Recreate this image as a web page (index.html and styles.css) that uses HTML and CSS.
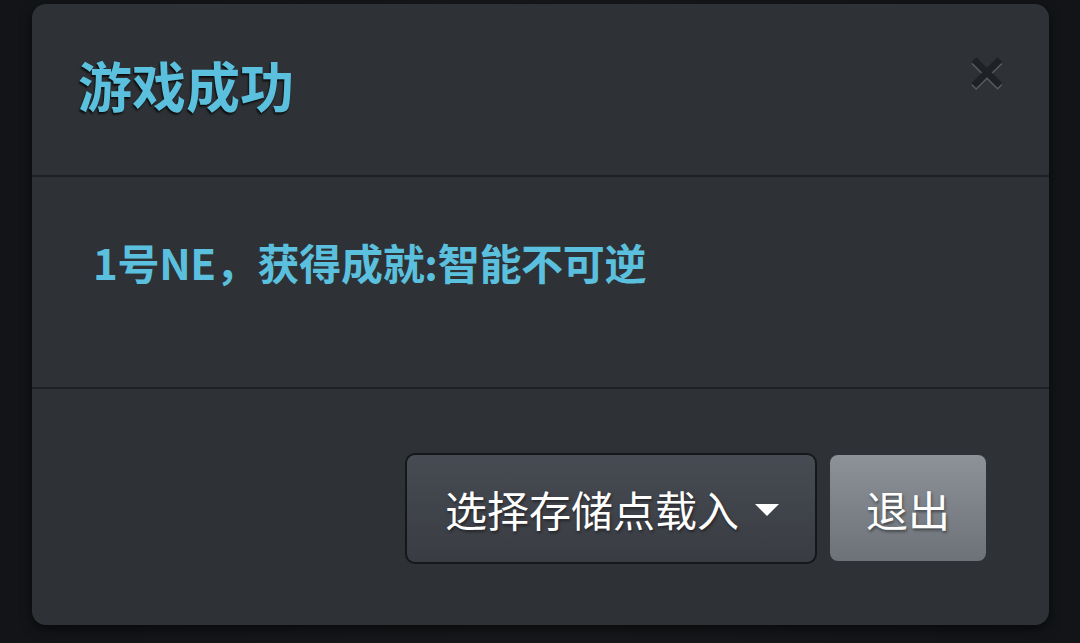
FILE: index.html
```html
<!DOCTYPE html>
<html lang="zh">
<head>
<meta charset="utf-8">
<title>游戏成功</title>
<link rel="stylesheet" href="styles.css">
</head>
<body>
<div class="backdrop">
  <div class="modal">
    <div class="modal-header">
      <h4 class="modal-title">游戏成功</h4>
      <button class="close" type="button">×</button>
    </div>
    <div class="modal-body">
      <p class="message">1号NE，获得成就:智能不可逆</p>
    </div>
    <div class="modal-footer">
      <button class="btn btn-load" type="button">选择存储点载入<span class="caret"></span></button>
      <button class="btn btn-exit" type="button">退出</button>
    </div>
  </div>
</div>
</body>
</html>
```

FILE: styles.css
```css
html, body {
  margin: 0;
  padding: 0;
  height: 100%;
  background: #0f1114;
  font-family: "Noto Sans CJK SC", "Noto Sans", sans-serif;
}
.backdrop {
  box-sizing: border-box;
  height: 643px;
  padding: 4px 31px 18px 32px;
  background: linear-gradient(90deg, #121417 0%, #16181b 50%, #121417 100%);
}
.modal {
  height: 100%;
  background: #2e3236;
  border-radius: 14px;
  box-shadow: 0 4px 12px rgba(0,0,0,0.6);
  display: flex;
  flex-direction: column;
}
.modal-header {
  box-sizing: border-box;
  height: 173px;
  border-bottom: 2px solid #1d2024;
  display: flex;
  justify-content: space-between;
  align-items: center;
  padding: 0 44px 10px 46px;
}
.modal-title {
  margin: 0;
  font-size: 54px;
  line-height: 60px;
  font-weight: 700;
  color: #5bc0de;
  text-shadow: -1px 2px 2px rgba(0,0,0,0.75);
}
.close {
  align-self: flex-start;
  margin-top: 37px;
  margin-right: 0;
  background: none;
  border: 0;
  padding: 0;
  font-family: "Liberation Sans", sans-serif;
  font-weight: 700;
  font-size: 62px;
  line-height: 62px;
  color: #1e2226;
  text-shadow: 0 2px 0 rgba(255,255,255,0.2);
}
.modal-body {
  box-sizing: border-box;
  height: 212px;
  border-bottom: 2px solid #1d2024;
  padding: 60px 0 0 61px;
}
.message {
  margin: 0;
  font-size: 42px;
  line-height: 50px;
  font-weight: 700;
  letter-spacing: -0.3px;
  color: #5bc0de;
}
.modal-footer {
  flex: 1;
  display: flex;
  justify-content: flex-end;
  align-items: center;
  gap: 13px;
  padding: 0 63px 0 0;
  margin-top: 2px;
}
.btn {
  font-family: "Noto Sans CJK SC", "Noto Sans", sans-serif;
  font-size: 42px;
  color: #ffffff;
  text-shadow: 1px 2px 3px rgba(0,0,0,0.45);
  display: flex;
  align-items: center;
  justify-content: center;
  box-sizing: border-box;
  cursor: pointer;
}
.btn-load {
  width: 412px;
  height: 111px;
  border: 2px solid #15171a;
  border-radius: 10px;
  background: linear-gradient(180deg, #474b53 0%, #393c42 100%);
  padding: 0 36px 0 38px;
  justify-content: space-between;
}
.caret {
  width: 0;
  height: 0;
  border-left: 12px solid transparent;
  border-right: 12px solid transparent;
  border-top: 12px solid #ffffff;
  margin-top: 4px;
}
.btn-exit {
  width: 156px;
  height: 106px;
  border: 0;
  border-radius: 8px;
  background: linear-gradient(180deg, #8c9298 0%, #6c7278 100%);
  padding: 0;
}
```
